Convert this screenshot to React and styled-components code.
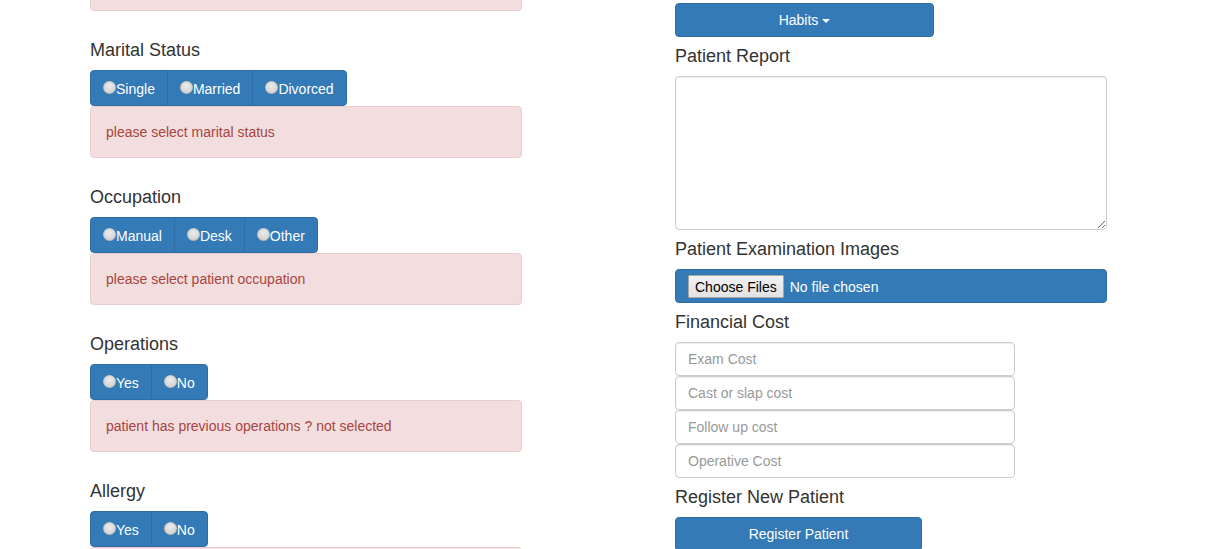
import React from 'react';
import styled, { createGlobalStyle } from 'styled-components';

const GlobalStyle = createGlobalStyle`
  html, body {
    margin: 0;
    padding: 0;
    background: #fff;
    overflow: hidden;
  }
  body {
    font-family: 'Liberation Sans', Arial, sans-serif;
    font-size: 14px;
    line-height: 1.42857;
    color: #333;
  }
  * { box-sizing: border-box; }
`;

const Page = styled.div`
  display: flex;
  align-items: flex-start;
  gap: 153px;
  padding-left: 90px;
  height: 549px;
  overflow: hidden;
`;

const Column = styled.div`
  width: 432px;
  display: flex;
  flex-direction: column;
  align-items: flex-start;
  padding-top: ${p => p.$top || 0}px;
`;

const Heading = styled.h4`
  margin: ${p => (p.$tight ? '9px 0 10px' : '1px 0 10px')};
  font-size: 18px;
  font-weight: 500;
  line-height: 20px;
  color: #333;
`;

const Alert = styled.div`
  width: 100%;
  padding: 15px;
  margin-top: ${p => p.$offset || 0}px;
  margin-bottom: 28px;
  line-height: 20px;
  color: #a94442;
  background: #f2dede;
  border: 1px solid #ebccd1;
  border-radius: 4px;
  min-height: 52px;
`;

const BtnGroup = styled.div`
  display: inline-flex;
  height: 36px;
`;

const RadioBtn = styled.label`
  display: inline-block;
  padding: 6px 12px;
  color: #fff;
  background: #337ab7;
  border: 1px solid #2e6da4;
  line-height: 20px;
  white-space: nowrap;
  cursor: pointer;
  & + & { margin-left: -1px; }
  &:first-child { border-radius: 4px 0 0 4px; }
  &:last-child { border-radius: 0 4px 4px 0; }
`;

const RadioDot = styled.span`
  display: inline-block;
  width: 13px;
  height: 13px;
  margin-top: 4px;
  vertical-align: baseline;
  border-radius: 50%;
  background: radial-gradient(circle at 50% 38%, #ececec 0%, #d8d8d8 55%, #bcbcbc 100%);
  box-shadow: inset 0 0 0 1px rgba(0, 0, 0, 0.1);
`;

const PrimaryButton = styled.button`
  width: ${p => p.$w}px;
  height: 34px;
  padding: 6px 12px;
  font-family: inherit;
  font-size: 14px;
  line-height: 20px;
  color: #fff;
  background: #337ab7;
  border: 1px solid #2e6da4;
  border-radius: 4px;
  cursor: pointer;
  flex-shrink: 0;
`;

const Caret = styled.span`
  display: inline-block;
  width: 0;
  height: 0;
  margin-left: 4px;
  vertical-align: middle;
  border-top: 4px solid #fff;
  border-left: 4px solid transparent;
  border-right: 4px solid transparent;
`;

const TextArea = styled.textarea`
  width: 432px;
  height: 154px;
  padding: 6px 12px;
  font-family: inherit;
  font-size: 14px;
  border: 1px solid #ccc;
  border-radius: 4px;
  box-shadow: inset 0 1px 1px rgba(0, 0, 0, 0.075);
  resize: vertical;
  display: block;
`;

const FileBar = styled.div`
  width: 432px;
  height: 34px;
  padding: 0 12px;
  display: flex;
  align-items: center;
  background: #337ab7;
  border: 1px solid #2e6da4;
  border-radius: 4px;
`;

const FileInput = styled.input`
  font-family: 'Liberation Sans', Arial, sans-serif;
  font-size: 14px;
  color: #fff;
  &::file-selector-button {
    font-family: 'Liberation Sans', Arial, sans-serif;
    font-size: 14px;
    height: 23px;
    padding: 0 6px;
    margin: 1px 6px 0 0;
    color: #000;
    background: linear-gradient(#f2f2f2, #e2e2e2);
    border: 1px solid #a6a6a6;
    border-radius: 1px;
  }
`;

const CostInput = styled.input`
  width: 340px;
  height: 34px;
  padding: 6px 12px;
  font-family: inherit;
  font-size: 14px;
  color: #555;
  border: 1px solid #ccc;
  border-radius: 4px;
  box-shadow: inset 0 1px 1px rgba(0, 0, 0, 0.075);
  display: block;
  &::placeholder { color: #999; }
`;

const sections = [
  { title: 'Marital Status', name: 'marital', options: ['Single', 'Married', 'Divorced'], error: 'please select marital status' },
  { title: 'Occupation', name: 'occupation', options: ['Manual', 'Desk', 'Other'], error: 'please select patient occupation' },
  { title: 'Operations', name: 'operations', options: ['Yes', 'No'], error: 'patient has previous operations ? not selected' },
  { title: 'Allergy', name: 'allergy', options: ['Yes', 'No'], error: null },
];

const costs = ['Exam Cost', 'Cast or slap cost', 'Follow up cost', 'Operative Cost'];

export default function App() {
  return (
    <>
      <GlobalStyle />
      <Page>
        <Column>
          <Alert $offset={-41} />
          {sections.map(s => (
            <React.Fragment key={s.name}>
              <Heading>{s.title}</Heading>
              <BtnGroup>
                {s.options.map(o => (
                  <RadioBtn key={o}>
                    <RadioDot />{o}
                  </RadioBtn>
                ))}
              </BtnGroup>
              <Alert>{s.error}</Alert>
            </React.Fragment>
          ))}
        </Column>
        <Column $top={3}>
          <PrimaryButton $w={259}>
            Habits<Caret />
          </PrimaryButton>
          <Heading $tight>Patient Report</Heading>
          <TextArea />
          <Heading $tight>Patient Examination Images</Heading>
          <FileBar>
            <FileInput type="file" multiple />
          </FileBar>
          <Heading $tight>Financial Cost</Heading>
          {costs.map(c => (
            <CostInput key={c} placeholder={c} />
          ))}
          <Heading $tight>Register New Patient</Heading>
          <PrimaryButton $w={247}>Register Patient</PrimaryButton>
        </Column>
      </Page>
    </>
  );
}
